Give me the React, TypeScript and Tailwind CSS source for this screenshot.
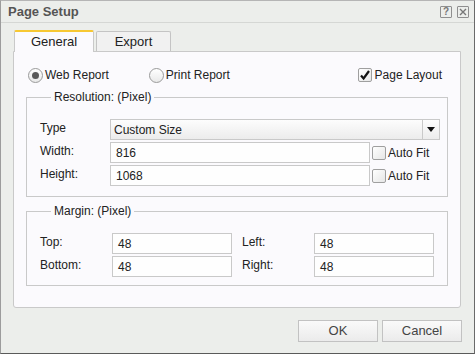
import React from "react";

function Radio({ checked }: { checked?: boolean }) {
  return (
    <span className="flex h-[15px] w-[15px] items-center justify-center rounded-full border border-[#9a9a9a] bg-gradient-to-b from-[#ffffff] to-[#e9e9e9]">
      {checked && <span className="h-[7px] w-[7px] rounded-full bg-[#5a5a5a]" />}
    </span>
  );
}

function Check({ checked }: { checked?: boolean }) {
  return (
    <span className="flex h-[14px] w-[14px] items-center justify-center rounded-[2px] border border-[#9f9f9f] bg-gradient-to-br from-[#ffffff] to-[#e6e6e6]">
      {checked && (
        <svg width="12" height="12" viewBox="0 0 12 12">
          <path d="M2 6.5 L4.6 9.5 L10 2" fill="none" stroke="#111" strokeWidth="2.2" />
        </svg>
      )}
    </span>
  );
}

function TextBox({ value, w }: { value: string; w: string }) {
  return (
    <div className={`flex h-[21px] items-center border border-[#c9c9c9] bg-[#fefefe] pl-[5px] ${w}`}>
      {value}
    </div>
  );
}

export default function App() {
  return (
    <div
      className="flex h-[354px] w-[475px] flex-col border border-t-[#b5b5b5] border-l-[#9c9c9c] border-r-[#6a6a6a] border-b-[#5a5a5a] bg-[#eceeeb] text-[12px] text-[#222]"
      style={{ fontFamily: '"Liberation Sans", Arial, sans-serif' }}
    >
      {/* title bar */}
      <div className="flex h-[22px] items-center justify-between border-b border-[#d5d7d4] pl-[7px] pr-[5px]">
        <span className="text-[13px] font-bold text-[#555]">Page Setup</span>
        <div className="flex gap-[5px]">
          <span className="flex h-[12px] w-[12px] items-center justify-center rounded-[1px] border border-[#8f8f8f] text-[10px] font-bold leading-none text-[#777]">
            ?
          </span>
          <span className="flex h-[12px] w-[12px] items-center justify-center rounded-[1px] border border-[#8f8f8f]">
            <svg width="8" height="8" viewBox="0 0 8 8">
              <path d="M1 1 L7 7 M7 1 L1 7" stroke="#777" strokeWidth="1.4" />
            </svg>
          </span>
        </div>
      </div>

      {/* tabs */}
      <div className="mt-[7px] flex items-end gap-[2px] pl-[13px]">
        <div className="relative z-10 -mb-px flex h-[22px] w-[80px] items-center justify-center rounded-t-[2px] border-x border-t-2 border-x-[#c9c9c9] border-t-[#f7c833] bg-[#fbfafd] text-[13px]">
          General
        </div>
        <div className="flex h-[20px] w-[75px] items-center justify-center rounded-t-[2px] border border-b-0 border-[#c4c4c4] bg-[#f1f1f1] text-[13px]">
          Export
        </div>
      </div>

      {/* panel */}
      <div className="ml-[12px] flex h-[257px] w-[448px] flex-col rounded-b-[3px] border border-[#c9c9c9] bg-[#fbfafd] px-[12px] pt-[15px]">
        <div className="flex h-[16px] items-center">
          <div className="flex items-center gap-[2px] pl-[2px]">
            <Radio checked />
            <span>Web Report</span>
          </div>
          <div className="ml-[40px] flex items-center gap-[2px]">
            <Radio />
            <span>Print Report</span>
          </div>
          <div className="ml-auto mr-[6px] flex items-center gap-[3px]">
            <Check checked />
            <span>Page Layout</span>
          </div>
        </div>

        <fieldset className="mt-[7px] border border-[#c9c9c9] pb-[10px] pl-[13px] pr-[7px] pt-[15px]">
          <legend className="ml-[11px] px-[3px] leading-[14px]">Resolution: (Pixel)</legend>
          <div className="flex flex-col gap-[2px]">
            <div className="flex items-center">
              <span className="-mt-[4px] w-[70px]">Type</span>
              <div className="flex h-[21px] flex-1 items-center border border-[#c9c9c9] bg-gradient-to-b from-[#fdfdfd] to-[#ececec]">
                <span className="flex-1 pl-[3px]">Custom Size</span>
                <span className="flex h-full w-[17px] items-center justify-center border-l border-[#c9c9c9]">
                  <svg width="8" height="6" viewBox="0 0 8 6">
                    <path d="M0 0 L8 0 L4 5 Z" fill="#111" />
                  </svg>
                </span>
              </div>
            </div>
            {[
              ["Width:", "816"],
              ["Height:", "1068"],
            ].map(([label, v]) => (
              <div key={label} className="flex items-center">
                <span className="-mt-[4px] w-[70px]">{label}</span>
                <TextBox value={v} w="w-[260px]" />
                <div className="ml-[2px] flex items-center gap-[2px]">
                  <Check />
                  <span>Auto Fit</span>
                </div>
              </div>
            ))}
          </div>
        </fieldset>

        <fieldset className="mt-[7px] border border-[#c9c9c9] pb-[8px] pl-[13px] pr-[7px] pt-[15px]">
          <legend className="ml-[11px] px-[3px] leading-[14px]">Margin: (Pixel)</legend>
          <div className="flex flex-col gap-[2px]">
            {[
              ["Top:", "48", "Left:", "48"],
              ["Bottom:", "48", "Right:", "48"],
            ].map(([l1, v1, l2, v2]) => (
              <div key={l1} className="flex items-center">
                <span className="-mt-[4px] w-[72px]">{l1}</span>
                <TextBox value={v1} w="w-[120px]" />
                <span className="-mt-[4px] ml-[10px] w-[72px]">{l2}</span>
                <TextBox value={v2} w="w-[120px]" />
              </div>
            ))}
          </div>
        </fieldset>
      </div>

      {/* buttons */}
      <div className="mt-[12px] flex justify-end gap-[4px] pr-[12px]">
        {["OK", "Cancel"].map((b) => (
          <button
            key={b}
            className="flex h-[22px] w-[80px] items-center justify-center border border-[#c2c2c2] bg-gradient-to-b from-[#fafafa] to-[#ebebeb] text-[13px] text-[#444]"
          >
            {b}
          </button>
        ))}
      </div>
    </div>
  );
}
